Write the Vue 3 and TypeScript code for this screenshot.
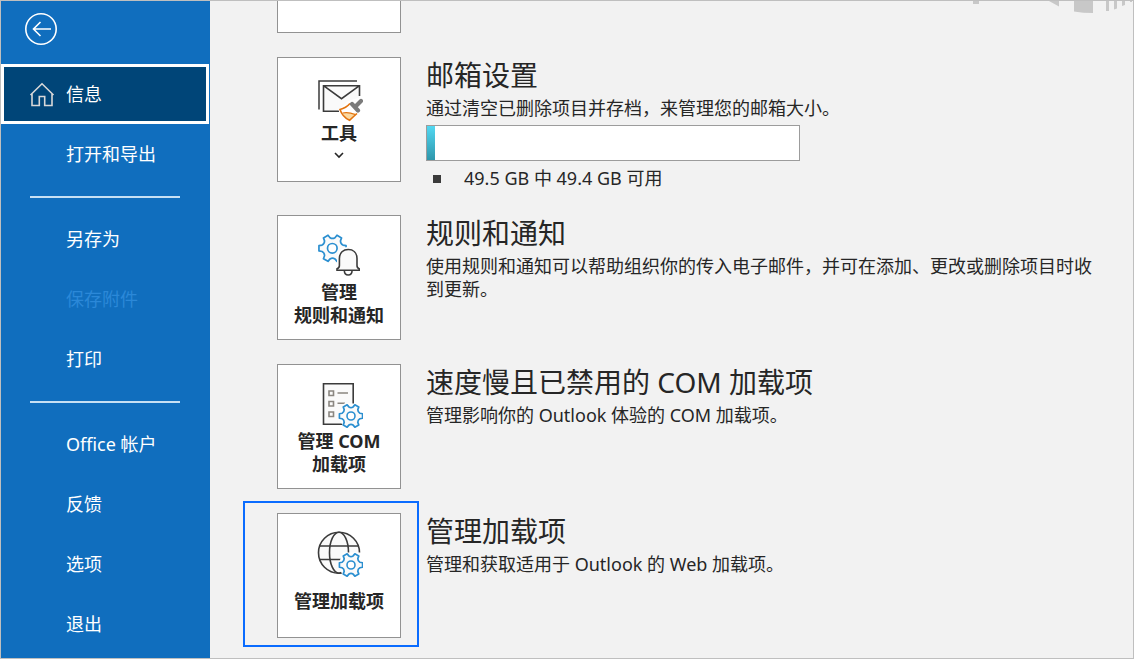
<script setup lang="ts">
type IconName = 'tools' | 'rules' | 'com' | 'web'

interface NavItem {
  label: string
  active?: boolean
  disabled?: boolean
}

interface Section {
  icon: IconName
  button: string[]
  title: string
  text: string
  menu?: boolean
  quota?: boolean
  highlighted?: boolean
}

const navGroups: NavItem[][] = [
  [{ label: '信息', active: true }, { label: '打开和导出' }],
  [{ label: '另存为' }, { label: '保存附件', disabled: true }, { label: '打印' }],
  [{ label: 'Office 帐户' }, { label: '反馈' }, { label: '选项' }, { label: '退出' }],
]

const sections: Section[] = [
  {
    icon: 'tools',
    button: ['工具'],
    title: '邮箱设置',
    text: '通过清空已删除项目并存档，来管理您的邮箱大小。',
    menu: true,
    quota: true,
  },
  {
    icon: 'rules',
    button: ['管理', '规则和通知'],
    title: '规则和通知',
    text: '使用规则和通知可以帮助组织你的传入电子邮件，并可在添加、更改或删除项目时收到更新。',
  },
  {
    icon: 'com',
    button: ['管理 COM', '加载项'],
    title: '速度慢且已禁用的 COM 加载项',
    text: '管理影响你的 Outlook 体验的 COM 加载项。',
  },
  {
    icon: 'web',
    button: ['管理加载项'],
    title: '管理加载项',
    text: '管理和获取适用于 Outlook 的 Web 加载项。',
    highlighted: true,
  },
]

const usedPercent = 2.2

// Six-toothed gear outline with curved valleys between the teeth
function gear(cx: number, cy: number, r: number): string {
  const at = (deg: number, radius: number) => {
    const a = (deg * Math.PI) / 180
    return `${(cx + radius * Math.cos(a)).toFixed(2)} ${(cy + radius * Math.sin(a)).toFixed(2)}`
  }
  let d = ''
  for (let k = 0; k < 6; k++) {
    const a = k * 60
    d += `${k ? 'L' : 'M'}${at(a - 11, r)}L${at(a + 11, r)}L${at(a + 17, r * 0.79)}`
    d += `Q${at(a + 30, r * 0.66)} ${at(a + 43, r * 0.79)}`
  }
  return d + 'Z'
}

const largeGear = gear(17.5, 16.3, 13.8)
const smallGear = gear(36, 35, 11.8)
</script>

<template>
  <div class="backstage">
    <nav class="sidebar" aria-label="文件">
      <button class="back" type="button" aria-label="返回">
        <svg viewBox="0 0 32 32" width="32" height="32" fill="none" stroke="#fff">
          <circle cx="16" cy="16" r="15.2" stroke-width="1.6" />
          <path d="M26 16H8.500M15.500 9L8.500 16L15.500 23" stroke-width="1.6" />
        </svg>
      </button>
      <template v-for="(group, g) in navGroups" :key="g">
        <hr v-if="g > 0" class="divider" />
        <button
          v-for="item in group"
          :key="item.label"
          type="button"
          class="nav-item"
          :class="{ active: item.active }"
          :disabled="item.disabled"
        >
          <svg v-if="item.active" class="home" viewBox="0 0 26 26" width="26" height="26">
            <path
              d="M1.500 14L13 2.800L24.500 14M3 12.800V24.500H10.300V15.500H15.700V24.500H23V12.800"
              fill="none"
              stroke="#d8d8d8"
              stroke-width="1.6"
            />
          </svg>
          {{ item.label }}
        </button>
      </template>
    </nav>

    <main class="content">
      <svg class="ornament" viewBox="0 0 160 12" width="160" height="12" fill="#c8c8c8" aria-hidden="true">
        <path d="M0 0H6V3H0ZM76 0H86V5.500ZM101 0H120V12Q110 12 101 10.500ZM133 0H136V10H133ZM141 0H144V7.500L141 8.500ZM149 0H152V4L149 5ZM157 0H159V1H157Z" />
      </svg>
      <div class="card-tail"></div>

      <section v-for="s in sections" :key="s.title" class="row" :class="{ highlighted: s.highlighted }">
        <button type="button" class="card" :class="{ menu: s.menu }">
          <svg v-if="s.icon === 'tools'" viewBox="0 0 48 48" width="48" height="48" fill="none">
            <path d="M4 35.500V7H42" stroke="#3b3b3b" stroke-width="1.5" />
            <path d="M8.500 11.700H44.500V37H8.500Z" fill="#fafafa" />
            <path d="M24 37.300H8.500V11.700H44.500V22M8.500 11.700L26.500 24.700L44.500 11.700" stroke="#3b3b3b" stroke-width="1.6" />
            <path d="M23.500 36L33 27L46 23L48 30L44 42L34 48Z" fill="#fff" />
            <path d="M25 35.500Q31 34 35 29.500L43 38Q38 41 34.500 46.300Q27.500 43 25 35.500Z" fill="#fff" />
            <path d="M27.500 39L42 39.500Q37.500 42 34.500 46.300Q30 44 27.500 39Z" fill="#fbd9a0" />
            <path d="M35 29.500Q31 34 25 35.500Q27.500 43 34.500 46.300Q38 43 42 39.500" stroke="#e2730e" stroke-width="1.6" />
            <path d="M27.500 39Q34 38 40 40.500" stroke="#e2730e" stroke-width="1.2" />
            <path d="M37 30L43 36.500M40.500 32.500L46 27" stroke="#7b7b7b" stroke-width="4.2" stroke-linecap="round" />
          </svg>
          <svg v-else-if="s.icon === 'rules'" viewBox="0 0 48 48" width="48" height="48" fill="none">
            <path :d="largeGear" fill="#fafafa" stroke="#2b8fd0" stroke-width="1.7" stroke-linejoin="round" />
            <circle cx="17.3" cy="16.3" r="4.800" fill="#fff" stroke="#2b8fd0" stroke-width="1.7" />
            <path d="M20 36L22 34V24Q24 15 33 15Q43 15 44.500 25V46H27L20 40Z" fill="#fff" />
            <path d="M22 38.200H44.200V36.800Q42 36 42 33.500V26.500C42 20.500 38 17.500 33.200 17.500S24.400 20.500 24.400 26.500V33.500Q24.400 36 22 36.800Z" fill="#fafafa" stroke="#3b3b3b" stroke-width="1.6" />
            <path d="M29.300 38.500Q29.500 43 33.200 43T37.100 38.500" stroke="#3b3b3b" stroke-width="1.6" />
          </svg>
          <svg v-else-if="s.icon === 'com'" viewBox="0 0 48 48" width="48" height="48" fill="none">
            <path d="M8.500 2.700H38.200V43.300H8.500Z" fill="#fafafa" stroke="#3b3b3b" stroke-width="1.6" />
            <path d="M14 10H18.500V14.500H14ZM14 20.500H18.500V25H14ZM14 31H18.500V35.500H14ZM22.500 12H33M22.500 22.300H30" stroke="#8a8680" stroke-width="1.6" />
            <path d="M29 22.500H41V45H28L23 35Z" fill="#fff" />
            <path :d="smallGear" fill="#fafafa" stroke="#2b8fd0" stroke-width="1.7" stroke-linejoin="round" />
            <circle cx="36" cy="35" r="4" fill="#fff" stroke="#2b8fd0" stroke-width="1.6" />
          </svg>
          <svg v-else viewBox="0 0 48 48" width="48" height="48" fill="none">
            <g stroke="#3b3b3b" stroke-width="1.6">
              <circle cx="24" cy="22.700" r="20.500" fill="#fafafa" />
              <ellipse cx="24" cy="22.700" rx="9.500" ry="20.500" />
              <path d="M4.500 16H43.500M4.500 29.500H43.500" />
            </g>
            <path d="M28 22.500H46V46H28L23 35Z" fill="#fff" />
            <path :d="smallGear" fill="#fafafa" stroke="#2b8fd0" stroke-width="1.7" stroke-linejoin="round" />
            <circle cx="36" cy="35" r="4" fill="#fff" stroke="#2b8fd0" stroke-width="1.6" />
          </svg>
          <span class="card-label">
            <span v-for="line in s.button" :key="line">{{ line }}</span>
          </span>
          <svg v-if="s.menu" class="chevron" viewBox="0 0 10 20" width="10" height="20">
            <path d="M1 8L5 12L9 8" fill="none" stroke="#262626" stroke-width="1.6" />
          </svg>
        </button>
        <div class="info">
          <h2>{{ s.title }}</h2>
          <p>{{ s.text }}</p>
          <template v-if="s.quota">
            <div
              class="quota"
              role="meter"
              aria-label="邮箱大小"
              aria-valuemin="0"
              aria-valuemax="100"
              :aria-valuenow="usedPercent"
            >
              <div class="quota-fill" :style="{ width: usedPercent + '%' }"></div>
            </div>
            <ul>
              <li>49.5 GB 中 49.4 GB 可用</li>
            </ul>
          </template>
        </div>
      </section>
    </main>
  </div>
</template>

<style>
body {
  margin: 0;
}
</style>

<style scoped>
.backstage {
  box-sizing: border-box;
  display: flex;
  min-height: 100vh;
  border: 1px solid #bfbfbf;
  background: #f2f2f2;
  color: #262626;
  font: 18px/23px "Noto Sans", "Noto Sans CJK SC", sans-serif;
}

button {
  margin: 0;
  font: inherit;
  color: inherit;
}

.sidebar {
  flex: none;
  display: flex;
  flex-direction: column;
  width: 209px;
  background: #106ebe;
  color: #fff;
}

.back {
  align-self: flex-start;
  margin: 12px 0 19px 24px;
  padding: 0;
  border: 0;
  background: none;
}

.back svg {
  display: block;
}

.nav-item {
  display: flex;
  align-items: center;
  height: 60px;
  padding: 0 0 0 65px;
  border: 0;
  background: none;
  text-align: left;
}

.nav-item:disabled {
  color: #2b88d8;
}

.nav-item.active {
  gap: 11px;
  margin-right: 1px;
  padding-left: 25px;
  border: 3px solid #fff;
  background: #004578;
}

.divider {
  flex: none;
  width: 150px;
  height: 2px;
  margin: 12px 0 11px 29px;
  border: 0;
  background: #c7e0f4;
}

.content {
  position: relative;
  flex: 1;
  display: flex;
  flex-direction: column;
  gap: 24px;
  min-width: 0;
  padding: 0 34px 20px 67px;
}

.ornament {
  position: absolute;
  top: 0;
  right: 0;
}

.card-tail {
  box-sizing: border-box;
  width: 124px;
  height: 32px;
  border: 1px solid #929292;
  border-top: 0;
  background: #fff;
}

.row {
  position: relative;
  display: flex;
  align-items: flex-start;
  gap: 25px;
}

.card {
  box-sizing: border-box;
  flex: none;
  display: flex;
  flex-direction: column;
  align-items: center;
  width: 124px;
  height: 125px;
  padding: 16px 0 0;
  border: 1px solid #929292;
  background: #fff;
  font-weight: 700;
}

.card svg {
  flex: none;
}

.card-label {
  display: flex;
  flex-direction: column;
  margin-top: 1px;
  white-space: nowrap;
}

.menu .card-label {
  margin-top: 0;
}

.highlighted .card-label {
  margin-top: 12px;
}

.highlighted::before {
  content: "";
  position: absolute;
  top: -12px;
  bottom: -9px;
  left: -34px;
  box-sizing: border-box;
  width: 176px;
  border: 2px solid #0a6cff;
  pointer-events: none;
}

.info {
  flex: 1;
  min-width: 0;
}

h2 {
  margin: 0 0 4px;
  font-size: 28px;
  line-height: 36px;
  font-weight: 400;
}

p {
  margin: 0;
}

.quota {
  box-sizing: border-box;
  max-width: 374px;
  height: 36px;
  margin: 5px 0 6px;
  border: 1px solid #9c9c9c;
  background: #fff;
}

.quota-fill {
  height: 100%;
  background: linear-gradient(#52d8f2, #2e96ab);
}

ul {
  margin: 0;
  padding: 0 0 1px;
  list-style: none;
}

li {
  display: flex;
  align-items: center;
  gap: 23px;
  padding-left: 7px;
}

li::before {
  content: "";
  width: 8px;
  height: 8px;
  background: #3b3b3b;
}
</style>
